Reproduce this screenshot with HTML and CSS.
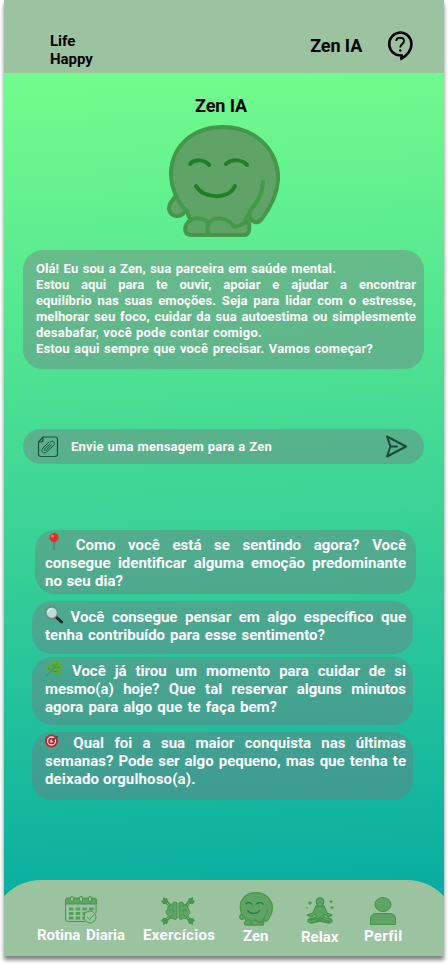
FILE: index.html
```html
<!DOCTYPE html>
<html lang="pt-BR">
<head>
<meta charset="utf-8">
<title>Zen IA</title>
<link rel="stylesheet" href="styles.css">
</head>
<body>
<svg class="defs" width="0" height="0">
  <defs>
    <symbol id="zen" viewBox="0 0 113 113">
      <g fill="#5fa466" stroke="#459849" stroke-width="4" stroke-linejoin="round" stroke-linecap="round">
        <path d="M8 72C5 76 2 78 2 84C3 91 12 94 18 87L26 87L18 60Z"/>
        <path d="M20 86C9 76 4 61 4 48C5 20 27 2 56 2C85 2 108 21 111 49C112 66 104 82 94 95C91 98 88 98 85 95C83 93 82 90 82 88L76 100L60 106H34L22 92Z"/>
        <path d="M96 57C95 67 92 75 86 82C83 85 82 88 83 92" fill="none"/>
        <path d="M42 110H25C15 111 17 98 24 95C29 92 37 93 42 98C46 92 61 91 67 102C71 101 76 99 82 96C83 105 82 110 77 110ZM42 110C40 106 40 101 42 98"/>
      </g>
      <g fill="none" stroke="#217d27" stroke-width="4" stroke-linecap="round">
        <path d="M23 39C28 34 37 34 42 40M59 39C65 34 75 34 80 40M29 61C36 74 62 75 68 61"/>
      </g>
    </symbol>
    <symbol id="dumbbell" viewBox="0 0 12 12"><path d="M2 0L4 1L6 1L7 4L12 10L10 12L5 7L2 7L0 4L2 3Z" fill="#45984d"/><path d="M6 6L10.500 10.500" stroke="#9bc3a0" stroke-width=".7"/></symbol>
  </defs>
</svg>
<div class="phone">
  <header class="top">
    <div class="brand">Life<br>Happy</div>
    <div class="heading top-title">Zen IA</div>
    <svg class="help" viewBox="0 0 26 30" fill="none" stroke="#000">
      <path d="M13 1.500A11.500 11.500 0 1 0 14.500 24.500V27.500C20 25 24.500 19 24.500 13A11.500 11.500 0 0 0 13 1.500Z" stroke-width="2.600"/>
      <path d="M9.300 10C9.300 5.500 17 5.500 17 10C17 13 13.200 13 13.200 16.500" stroke-width="2"/>
      <circle cx="13.200" cy="19.500" r="1.300" fill="#000" stroke="none"/>
    </svg>
  </header>
  <main>
    <h1 class="heading">Zen IA</h1>
    <svg class="mascot"><use href="#zen"/></svg>
    <section class="intro">
      <span class="line w300">Olá! Eu sou a Zen, sua parceira em saúde mental.</span>
      <span class="line">Estou aqui para te ouvir, apoiar e ajudar a encontrar</span>
      <span class="line">equilíbrio nas suas emoções. Seja para lidar com o estresse,</span>
      <span class="line">melhorar seu foco, cuidar da sua autoestima ou simplesmente</span>
      <span class="line w226">desabafar, você pode contar comigo.</span>
      <span class="line w337">Estou aqui sempre que você precisar. Vamos começar?</span>
    </section>
    <div class="composer">
      <svg class="clip" viewBox="0 0 22 22" fill="none" stroke="#1d5141" stroke-width="1.200" stroke-linejoin="round" stroke-linecap="round">
        <path d="M6 1H18Q20.500 1 20.500 3.500V18Q20.500 20.500 18 20.500H4Q1.500 20.500 1.500 18V6L6 1V4Q6 6 4 6H1.500"/>
        <path d="M11.500 6.500L6 12C3 15.500 6.800 18.500 9.500 16L16.500 9.500C19 6.500 15.500 3.500 13 6M14.500 9L9.300 14C8 15.300 6.500 14 8 12.500L13 7.800" stroke-width="1"/>
      </svg>
      <span class="line placeholder">Envie uma mensagem para a Zen</span>
      <svg class="send" viewBox="0 0 23 23" fill="none" stroke="#194b39" stroke-width="2" stroke-linejoin="round" stroke-linecap="round"><path d="M2 1.500L21 11.500L2 21.500L5.500 11.500ZM5.500 11.500H12"/></svg>
    </div>
    <section class="prompts">
      <p class="prompt first">
        <span class="line"><svg class="emoji" viewBox="0 0 18 18"><path d="M9 7V17" stroke="#66766d" stroke-width="1.300"/><circle cx="9" cy="4.500" r="4.500" fill="#df2f27"/><circle cx="7.500" cy="3" r="1.500" fill="#ff7a6a"/></svg> Como você está se sentindo agora? Você</span>
        <span class="line">consegue identificar alguma emoção predominante</span>
        <span class="line w77">no seu dia?</span>
      </p>
      <p class="prompt second">
        <span class="line"><svg class="emoji" viewBox="0 0 18 18"><path d="M11 11L16.500 16" stroke="#20262a" stroke-width="3" stroke-linecap="round"/><circle cx="6.700" cy="6.700" r="5.800" fill="#bfddd8" stroke="#718480" stroke-width="1.300"/><path d="M3 6C3 4 5 2.500 7 3" stroke="#eef8f5" fill="none"/></svg> Você consegue pensar em algo específico que</span>
        <span class="line w279">tenha contribuído para esse sentimento?</span>
      </p>
      <p class="prompt third">
        <span class="line"><svg class="emoji" viewBox="0 0 18 18"><g fill="#5aae32"><ellipse cx="13" cy="3" rx="2.200" ry="3.200" transform="rotate(25 13 3)"/><ellipse cx="8" cy="5" rx="2" ry="3.500" transform="rotate(-28 8 5)"/><ellipse cx="4" cy="9" rx="2" ry="3.700" transform="rotate(-60 4 9)"/><ellipse cx="14" cy="8" rx="2" ry="3.800" transform="rotate(75 14 8)"/><ellipse cx="12" cy="13" rx="2" ry="4" transform="rotate(105 12 13)"/></g><path d="M1 17Q8 12 13 3M7 12L3 9M10 9L8 5M10 9L15 8M7 12L14 13" stroke="#3f8a2b" stroke-width=".7" fill="none"/></svg> Você já tirou um momento para cuidar de si</span>
        <span class="line">mesmo(a) hoje? Que tal reservar alguns minutos</span>
        <span class="line w232">agora para algo que te faça bem?</span>
      </p>
      <p class="prompt fourth">
        <span class="line"><svg class="emoji" viewBox="0 0 18 18"><circle cx="6.500" cy="9" r="6.500" fill="#bd252d"/><circle cx="6.500" cy="9" r="4" fill="none" stroke="#f3e6df" stroke-width="1.300"/><circle cx="6.500" cy="9" r="1.500" fill="#f3e6df"/><path d="M7 9L13 4" stroke="#59372d" stroke-width="1.300"/><path d="M12 4L14 1L15 3L18 3L15 6Z" fill="#3a9fb8"/></svg> Qual foi a sua maior conquista nas últimas</span>
        <span class="line">semanas? Pode ser algo pequeno, mas que tenha te</span>
        <span class="line w150">deixado orgulhoso(a).</span>
      </p>
    </section>
  </main>
  <nav class="tabs">
    <a class="tab routine"><svg viewBox="0 0 34 28" width="34" height="28" fill="none" stroke="#45984d"><path d="M1.500 8V4Q1.500 2 4 2H30Q32.500 2 32.500 4V8Z" fill="#5fa466"/><path d="M32 8V17M21 25.500H4Q1.500 25.500 1.500 23V8"/><g fill="#9bc3a0"><rect x="6.500" y=".500" width="3" height="5" rx="1.500"/><rect x="15.500" y=".500" width="3" height="5" rx="1.500"/><rect x="24.500" y=".500" width="3" height="5" rx="1.500"/></g><path d="M5 13H30M5 17.500H25M5 22H21" stroke="#559f5c" stroke-width="3" stroke-dasharray="4.500 2.200"/><circle cx="26" cy="21" r="6" fill="#9bc3a0"/><path d="M23 21L25.500 23.500L30 18.500"/></svg><span class="line">Rotina Diaria</span></a>
    <a class="tab exercise"><svg viewBox="0 0 34 28" width="34" height="28"><use href="#dumbbell" width="12" height="12"/><use href="#dumbbell" width="12" height="12" transform="translate(34 0) scale(-1 1)"/><use href="#dumbbell" width="12" height="12" transform="translate(0 28) scale(1 -1)"/><use href="#dumbbell" width="12" height="12" transform="translate(34 28) scale(-1 -1)"/><g fill="#5fa466" stroke="#3f9447" stroke-linejoin="round"><path d="M16 6C13 4 11 6 11 8C8 8 6 10 7 12C4 14 5 17 7 18C7 21 11 22 12 21C13 23 15 23 16 21Z"/><path d="M18 6C21 4 23 6 23 8C26 8 28 10 27 12C30 14 29 17 27 18C27 21 23 22 22 21C21 23 19 23 18 21Z"/><path d="M11 8L13 10M8 13H12L13 16M10 19L12 17M23 8L21 10M26 13H22L21 16M24 19L22 17" fill="none"/></g></svg><span class="line">Exercícios</span></a>
    <a class="tab zen"><svg width="34" height="34"><use href="#zen"/></svg><span class="line">Zen</span></a>
    <a class="tab relax"><svg viewBox="0 0 30 28" width="30" height="28" fill="#5fa466" stroke="#409548" stroke-width="1.300" stroke-linejoin="round"><path d="M11 9H19L22 16L27 18L24 20L19 17V20L26 22Q29 25 24 26L15 24L6 26Q1 25 4 22L11 20V17L6 20L2 18L8 16Z"/><ellipse cx="15" cy="5" rx="3.800" ry="4.200"/><path d="M5 23L15 21L25 25M11 24L19 21" fill="none"/><path d="M5 4V8M3 6H7M26 3V6M24.500 4.500H27.500M27 9V12M25.500 10.500H28.500M2 10V12" stroke-width="1"/></svg><span class="line">Relax</span></a>
    <a class="tab profile"><svg viewBox="0 0 26 28" width="26" height="28" fill="#5fa466" stroke="#409548"><ellipse cx="13" cy="7.500" rx="8" ry="7"/><path d="M.500 27.500V22Q.500 16.500 7 16.500H19Q25.500 16.500 25.500 22V27.500Z"/></svg><span class="line">Perfil</span></a>
  </nav>
</div>
</body>
</html>
```
FILE: styles.css
```css
* { box-sizing: border-box; }
body { margin: 0; min-height: 964px; background: #fff; color: #fff; font-family: Roboto, "Liberation Sans", sans-serif; font-weight: 700; }
svg { display: block; flex: none; }
.defs { position: absolute; }
.phone { width: 440px; height: 956px; margin: 0 4px; display: flex; flex-direction: column; background: linear-gradient(177deg, #72fb8d 84px, #3dd596 511px, #09aea0 900px); box-shadow: 0 4px 4px rgba(0,0,0,.5); }
.top { height: 73px; background: #9bc3a0; color: #000; display: flex; align-items: flex-start; padding: 31px 31px 0 46px; }
.brand { width: 260px; font-size: 15px; line-height: 18px; padding-top: 1px; letter-spacing: -.05px; }
.heading { margin: 0; font-size: 18px; line-height: 22px; letter-spacing: -.1px; font-weight: 700; color: #000; }
.top-title { width: 78px; padding: 4px 0 0 1px; }
.help { width: 26px; height: 30px; }
main { flex: 1; display: flex; flex-direction: column; align-items: center; }
h1.heading { margin-top: 22px; padding-right: 6px; }
.mascot { width: 113px; height: 113px; margin: 8px 2px 0 0; }
.intro { width: 401px; height: 119px; margin: 12px 0 0 -1px; padding: 11px 8px 0 13px; border-radius: 20px; background: rgba(120,117,127,.4); font-size: 13px; line-height: 16px; letter-spacing: .08px; }
.line { display: block; white-space: nowrap; text-align-last: justify; }
.w300 { width: 300px; }
.w226 { width: 226px; letter-spacing: .25px; }
.w337 { width: 337px; letter-spacing: .15px; }
.w77 { width: 78px; }
.w279 { width: 280px; }
.w232 { width: 232px; }
.w150 { width: 150px; letter-spacing: .15px; }
.composer { width: 401px; height: 35px; margin: 60px 0 0 -1px; padding: 0 16px 0 14px; border-radius: 18px; background: rgba(120,117,127,.4); display: flex; align-items: center; font-size: 13px; letter-spacing: .2px; }
.clip { width: 22px; height: 22px; }
.send { width: 23px; height: 23px; margin-left: auto; }
.placeholder { width: 201px; margin-left: 12px; }
.prompts { width: 384px; margin-top: 66px; display: flex; flex-direction: column; font-size: 15px; line-height: 18px; letter-spacing: 0; }
.prompt { width: 381px; margin: 0; padding: 7px 7px 0 13px; border-radius: 20px; background: rgba(120,117,127,.4); }
.first { height: 64px; margin-left: 3px; padding: 6px 10px 0 10px; }
.second { height: 53px; margin-top: 7px; }
.third { height: 68px; margin-top: 3px; padding-top: 5px; }
.fourth { height: 68px; margin-top: 7px; padding-top: 2px; }
.emoji { display: inline-block; width: 18px; height: 18px; margin: -4px 0 0; vertical-align: -1px; }
.second .emoji, .fourth .emoji { vertical-align: -2px; }
.tabs { height: 76px; margin: 0 -13px; padding: 0 13px; border-radius: 50px 50px 0 0; background: #9bc3a0; clip-path: inset(0 13px); display: grid; grid-template-columns: 33px 88px 18px 73px 24px 34px 27px 38px 24px 39px; font-size: 15px; line-height: 18px; }
.tab { display: flex; flex-direction: column; align-items: center; white-space: nowrap; }
.tab .line { width: 100%; }
.routine { grid-column: 2; padding-top: 16px; letter-spacing: -.05px; }
.routine .line { margin-top: 2px; }
.exercise { grid-column: 4; padding-top: 17px; letter-spacing: .3px; }
.exercise .line { margin-top: 1px; }
.exercise svg { margin-left: -4px; }
.zen { grid-column: 6; padding-top: 12px; margin-left: -2px; }
.zen .line { width: 26px; margin-top: 1px; }
.relax { grid-column: 8; padding-top: 17px; }
.relax .line { margin-top: 3px; }
.profile { grid-column: 10; padding-top: 17px; letter-spacing: .3px; }
.profile .line { margin-top: 2px; padding-left: 1px; }
```
